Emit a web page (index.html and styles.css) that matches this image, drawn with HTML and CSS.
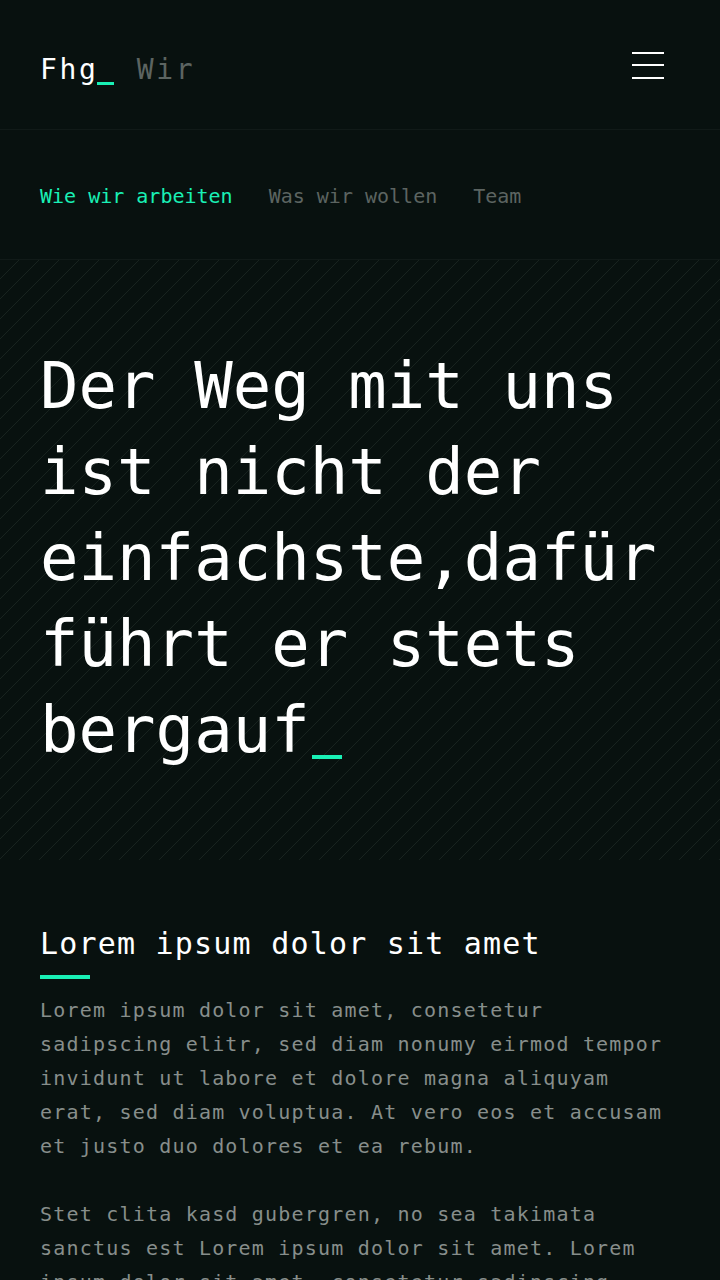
FILE: index.html
```html
<!DOCTYPE html>
<html lang="de">
<head>
<meta charset="utf-8">
<title>Fhg_ Wir</title>
<link rel="stylesheet" href="styles.css">
</head>
<body>
<header class="topbar">
  <div class="logo">Fhg<span class="logo-cursor"></span> <span class="logo-sub">Wir</span></div>
  <button class="menu" aria-label="Menü">
    <span></span><span></span><span></span>
  </button>
</header>
<nav class="subnav">
  <a class="subnav-item active" href="#">Wie wir arbeiten</a>
  <a class="subnav-item" href="#">Was wir wollen</a>
  <a class="subnav-item" href="#">Team</a>
</nav>
<section class="hero">
  <h1 class="hero-title">Der Weg mit uns ist nicht der einfachste,dafür führt er stets bergauf<span class="hero-cursor"></span></h1>
</section>
<main class="content">
  <h2 class="content-title">Lorem ipsum dolor sit amet</h2>
  <div class="content-bar"></div>
  <p class="content-text">Lorem ipsum dolor sit amet, consetetur sadipscing elitr, sed diam nonumy eirmod tempor invidunt ut labore et dolore magna aliquyam erat, sed diam voluptua. At vero eos et accusam et justo duo dolores et ea rebum.</p>
  <p class="content-text">Stet clita kasd gubergren, no sea takimata sanctus est Lorem ipsum dolor sit amet. Lorem ipsum dolor sit amet, consetetur sadipscing elitr, sed diam nonumy eirmod tempor invidunt ut labore et dolore magna aliquyam erat, sed diam voluptua.</p>
</main>
</body>
</html>
```
FILE: styles.css
```css
html, body {
  margin: 0;
  padding: 0;
  background: #08110f;
}
body {
  font-family: "DejaVu Sans Mono", "Liberation Mono", monospace;
  color: #f4f6f5;
}
.topbar {
  box-sizing: border-box;
  height: 130px;
  padding: 0 56px 0 40px;
  display: flex;
  align-items: center;
  justify-content: space-between;
  border-bottom: 1px solid #111a18;
}
.logo {
  font-size: 28px;
  line-height: 28px;
  letter-spacing: 2.6px;
  color: #ffffff;
  white-space: nowrap;
  margin-top: 11px;
}
.logo-cursor {
  display: inline-block;
  width: 17px;
  height: 3px;
  background: #19f0b5;
  vertical-align: -6px;
  margin-left: -1px;
  margin-right: 3px;
}
.logo-sub {
  color: #5c6461;
}
.menu {
  width: 32px;
  height: 27px;
  padding: 0;
  margin: 1px 0 0;
  border: 0;
  background: none;
  display: flex;
  flex-direction: column;
  justify-content: space-between;
}
.menu span {
  display: block;
  width: 32px;
  height: 2px;
  background: #ffffff;
}
.subnav {
  box-sizing: border-box;
  height: 130px;
  padding: 0 40px;
  display: flex;
  align-items: center;
  gap: 36px;
  border-bottom: 1px solid #111a18;
}
.subnav-item {
  font-size: 20px;
  line-height: 24px;
  color: #5c6461;
  text-decoration: none;
  white-space: nowrap;
  margin-top: 2px;
}
.subnav-item.active {
  color: #19f0b5;
}
.hero {
  box-sizing: border-box;
  height: 600px;
  padding: 83px 40px 0;
  background-image: repeating-linear-gradient(135deg, transparent 0, transparent 13.14px, #18231f 13.14px, #18231f 14.14px);
}
.hero-title {
  margin: 0;
  font-weight: normal;
  font-size: 64px;
  line-height: 86px;
  color: #ffffff;
}
.hero-cursor {
  display: inline-block;
  width: 30px;
  height: 4px;
  background: #19f0b5;
  vertical-align: -7px;
  margin-left: 2px;
}
.content {
  padding: 64px 40px 40px;
}
.content-title {
  margin: 0;
  font-weight: normal;
  font-size: 30px;
  line-height: 40px;
  letter-spacing: 1.2px;
  color: #ffffff;
}
.content-bar {
  width: 50px;
  height: 4px;
  background: #19f0b5;
  margin: 11px 0 14px;
}
.content-text {
  margin: 0 0 34px;
  font-size: 20px;
  line-height: 34px;
  letter-spacing: 1.2px;
  color: #878e8b;
}
```
